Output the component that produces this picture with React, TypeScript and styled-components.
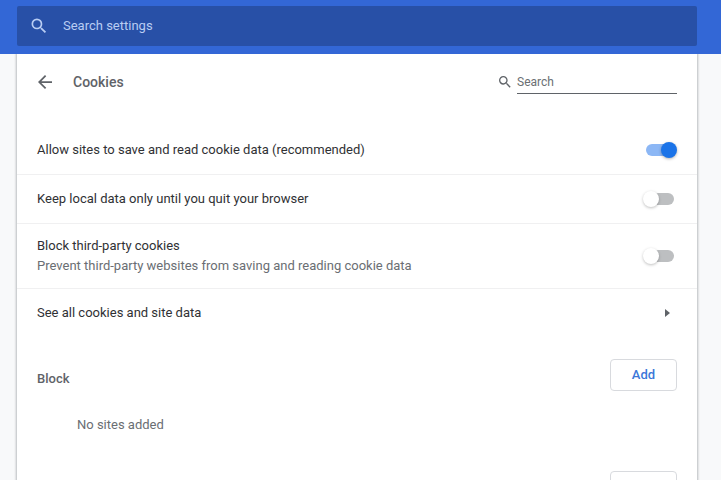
import React from 'react';
import styled, { createGlobalStyle } from 'styled-components';

const GlobalStyle = createGlobalStyle`
  * { box-sizing: border-box; }
  body {
    margin: 0;
    overflow: hidden;
    background: #f8f9fa;
    color: #303134;
    font: 400 13px/20px Roboto, sans-serif;
  }
`;

const Page = styled.div`
  height: 480px;
  overflow: hidden;
  display: flex;
  flex-direction: column;
`;

const TopBar = styled.header`
  flex: none;
  height: 54px;
  padding: 6px 24px 8px 17px;
  background: #3367d6;
`;

const SettingsSearch = styled.div`
  height: 40px;
  display: flex;
  align-items: center;
  gap: 14px;
  padding-left: 12px;
  border-radius: 2px;
  background: #2850a7;
  color: #b9cdf3;
`;

const Label = styled.span<{ $spacing?: number; $weight?: number }>`
  white-space: nowrap;
  letter-spacing: ${(p) => p.$spacing ?? 0}px;
  font-weight: ${(p) => p.$weight ?? 400};
`;

const Card = styled.main`
  flex: 1;
  margin: 0 24px 0 17px;
  background: #fff;
  box-shadow: 0 0 2px 1px rgba(60, 64, 67, 0.32);
  clip-path: inset(0 -6px);
`;

const TitleBar = styled.div`
  height: 72px;
  display: flex;
  align-items: flex-start;
  padding: 18px 20px 0 21px;
  color: #5f6368;
`;

const Title = styled.h1`
  flex: 1;
  margin: 0 0 0 21px;
  font-size: 14px;
  line-height: 20px;
  font-weight: 500;
`;

const BackIcon = styled.svg`
  margin: 3px 0 0;
`;

const SearchField = styled.div`
  width: 160px;
  height: 22px;
  margin-left: 4px;
  border-bottom: 1px solid #5f6368;
  font-size: 12px;
  color: #6b6f73;
`;

const FieldIcon = styled.div`
  height: 20px;
  display: flex;
  align-items: center;
`;

const Row = styled.div<{ $height: number; $last?: boolean }>`
  height: ${(p) => p.$height}px;
  display: flex;
  align-items: center;
  justify-content: space-between;
  padding: 0 20px;
  border-bottom: ${(p) => (p.$last ? 'none' : '1px solid #f0f0f1')};
`;

const RowText = styled.div`
  display: flex;
  flex-direction: column;
  margin-top: -1px;
`;

const Secondary = styled.div`
  color: #6a6e73;
`;

const Track = styled.div<{ $on?: boolean }>`
  width: 28px;
  height: 12px;
  margin-right: 3px;
  border-radius: 6px;
  display: flex;
  align-items: center;
  justify-content: ${(p) => (p.$on ? 'flex-end' : 'flex-start')};
  background: ${(p) => (p.$on ? '#8cb7f5' : '#bdbfc1')};
`;

const Knob = styled.div<{ $on?: boolean }>`
  flex: none;
  width: 16px;
  height: 16px;
  margin: 0 ${(p) => (p.$on ? '-3px' : '0')} 0 ${(p) => (p.$on ? '0' : '-3px')};
  border-radius: 50%;
  background: ${(p) => (p.$on ? '#1a73e8' : '#fff')};
  box-shadow: 0 1px 3px rgba(0, 0, 0, ${(p) => (p.$on ? 0.3 : 0.25)});
`;

const Arrow = styled.div`
  margin-right: 7px;
  border: 4px solid transparent;
  border-left: 5px solid #5f6368;
  border-right: 0;
`;

const SectionHeader = styled.div<{ $top: number }>`
  display: flex;
  justify-content: space-between;
  align-items: center;
  margin-top: ${(p) => p.$top}px;
  padding: 0 20px;
  color: #5f6368;
`;

const SectionTitle = styled.h2`
  margin: 7px 0 0;
  font: inherit;
`;

const AddButton = styled.button`
  width: 67px;
  height: 32px;
  margin-left: auto;
  padding: 0;
  border: 1px solid #d8dade;
  border-radius: 4px;
  background: #fff;
  color: #3b77d9;
  font: 500 13px/28px Roboto, sans-serif;
`;

const Empty = styled.div`
  margin: 24px 0 0 60px;
  color: #6a6e73;
`;

const SearchGlyph = ({ size }: { size: number }) => (
  <svg width={size} height={size} viewBox="0 0 24 24" fill="currentColor">
    <path d="M15.5 14h-.79l-.28-.27A6.47 6.47 0 0 0 16 9.5 6.5 6.5 0 1 0 9.5 16c1.61 0 3.09-.59 4.23-1.57l.27.28v.79l5 4.99L20.49 19l-4.99-5zm-6 0C7.01 14 5 11.99 5 9.5S7.01 5 9.5 5 14 7.01 14 9.5 11.99 14 9.5 14z" />
  </svg>
);

const Toggle = ({ on }: { on?: boolean }) => (
  <Track $on={on} role="switch" aria-checked={!!on}>
    <Knob $on={on} />
  </Track>
);

export default function App() {
  return (
    <Page>
      <GlobalStyle />
      <TopBar>
        <SettingsSearch>
          <SearchGlyph size={20} />
          <Label>Search settings</Label>
        </SettingsSearch>
      </TopBar>
      <Card>
        <TitleBar>
          <BackIcon width="14" height="14" viewBox="4 4 16 16" fill="currentColor">
            <path d="M20 11H7.83l5.59-5.59L12 4l-8 8 8 8 1.41-1.41L7.83 13H20v-2z" />
          </BackIcon>
          <Title>
            <Label $weight={500}>Cookies</Label>
          </Title>
          <FieldIcon>
            <SearchGlyph size={16} />
          </FieldIcon>
          <SearchField>
            <Label>Search</Label>
          </SearchField>
        </TitleBar>
        <Row $height={49}>
          <RowText>
            <Label>Allow sites to save and read cookie data (recommended)</Label>
          </RowText>
          <Toggle on />
        </Row>
        <Row $height={49}>
          <RowText>
            <Label>Keep local data only until you quit your browser</Label>
          </RowText>
          <Toggle />
        </Row>
        <Row $height={65}>
          <RowText>
            <Label>Block third-party cookies</Label>
            <Secondary>
              <Label>Prevent third-party websites from saving and reading cookie data</Label>
            </Secondary>
          </RowText>
          <Toggle />
        </Row>
        <Row $height={48} $last>
          <RowText>
            <Label>See all cookies and site data</Label>
          </RowText>
          <Arrow />
        </Row>
        <SectionHeader $top={22}>
          <SectionTitle>
            <Label $weight={500}>Block</Label>
          </SectionTitle>
          <AddButton>Add</AddButton>
        </SectionHeader>
        <Empty>
          <Label>No sites added</Label>
        </Empty>
        <SectionHeader $top={36}>
          <AddButton />
        </SectionHeader>
      </Card>
    </Page>
  );
}
